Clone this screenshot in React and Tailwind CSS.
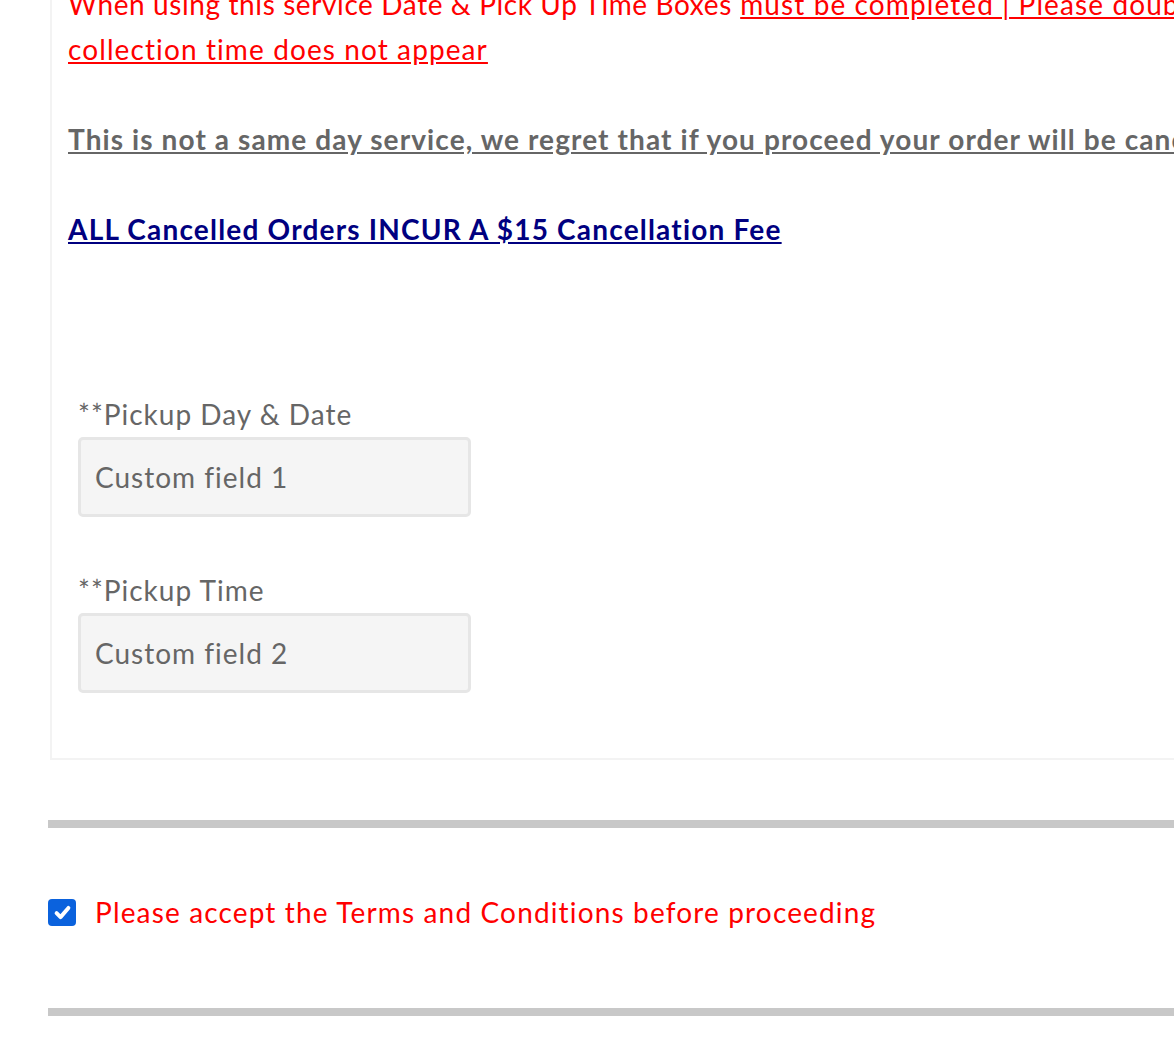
import React from 'react'

const Field = ({ label, placeholder }) => (
  <div className="flex flex-col">
    <label className="text-[28px] leading-[45px] tracking-[1px] text-[#666]">{label}</label>
    <input
      type="text"
      placeholder={placeholder}
      className="w-[393px] h-[80px] border-[3px] border-[#e6e6e6] bg-[#f5f5f5] rounded-[5px] pl-[14px] text-[28px] tracking-[1px] text-[#666] placeholder:text-[#666] focus:outline-none"
    />
  </div>
)

export default function App() {
  return (
    <div className="w-[1174px] h-[1045px] overflow-hidden bg-white font-['Lato',sans-serif]">
      <div className="w-[1800px] pl-[48px]">
        {/* Notice panel */}
        <div className="ml-[2px] -mt-[18px] border-2 border-t-0 border-[#f3f3f3] pl-[16px] pb-[65px]">
          <div className="text-[28px] leading-[45px] whitespace-nowrap">
            <p className="text-[#ff0000] tracking-[1.1px]">
              <span className="tracking-[0.6px]">When using this service Date &amp; Pick Up Time Boxes</span>{' '}
              <span className="underline">must be completed | Please double check your order if the</span>
              <br />
              <span className="underline">collection time does not appear</span>
            </p>
            <p className="mt-[45px] font-bold text-[#666] tracking-[1.1px] underline">
              This is not a same day service, we regret that if you proceed your order will be cancelled
            </p>
            <p className="mt-[45px] font-bold text-[#000080] tracking-[1.2px] underline">
              ALL Cancelled Orders INCUR A $15 Cancellation Fee
            </p>
          </div>

          <div className="ml-[10px] mt-[140px] flex flex-col gap-[51px]">
            <Field label="**Pickup Day & Date" placeholder="Custom field 1" />
            <Field label="**Pickup Time" placeholder="Custom field 2" />
          </div>
        </div>

        <div className="mt-[60px] h-[8px] bg-[#c8c8c8]" />

        {/* Terms */}
        <div className="h-[180px] pt-[71px]">
          <div className="h-[27px] flex items-center gap-[19px]">
            <div className="w-[28px] h-[27px] rounded-[4px] bg-[#0b62dd] flex items-center justify-center">
              <svg viewBox="0 0 16 16" className="w-[21px] h-[21px]" fill="none" stroke="white" strokeWidth="3" strokeLinecap="round" strokeLinejoin="round">
                <path d="M3.5 8.5l3 3 6-7" />
              </svg>
            </div>
            <span className="text-[28px] leading-[27px] tracking-[1.15px] text-[#ff0000]">Please accept the Terms and Conditions before proceeding</span>
          </div>
        </div>

        <div className="h-[8px] bg-[#c8c8c8]" />
      </div>
    </div>
  )
}
